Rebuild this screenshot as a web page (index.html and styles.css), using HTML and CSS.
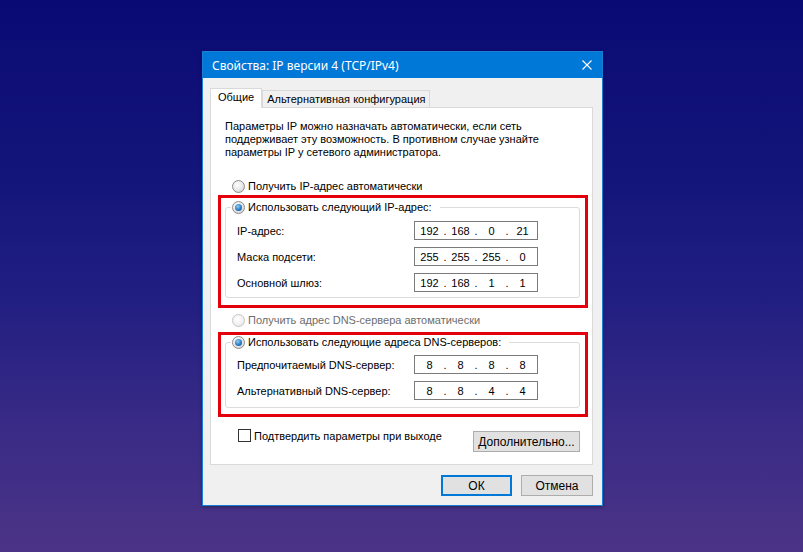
FILE: index.html
```html
<!DOCTYPE html>
<html lang="ru">
<head>
    <meta charset="UTF-8">
    <meta name="viewport" content="width=device-width, initial-scale=1.0">
    <title>Свойства: IP версии 4 (TCP/IPv4)</title>
    <link rel="stylesheet" href="styles.css">
</head>
<body>
    <div class="window">
        <div class="titlebar">
            <span>Свойства: IP версии 4 (TCP/IPv4)</span>
            <svg class="close" width="10" height="10" viewBox="0 0 10 10">
                <path d="M0.5 0.5 L9.5 9.5 M9.5 0.5 L0.5 9.5" stroke="#fff" stroke-width="1.1" fill="none"/>
            </svg>
        </div>

        <div class="content">
            <div class="tabs">
                <div class="tab active">Общие</div>
                <div class="tab">Альтернативная конфигурация</div>
            </div>

            <div class="panel">
                <p class="intro">Параметры IP можно назначать автоматически, если сеть<br>поддерживает эту возможность. В противном случае узнайте<br>параметры IP у сетевого администратора.</p>

                <div class="option"><span class="radio"></span>Получить IP-адрес автоматически</div>

                <div class="highlight hl-ip">
                    <fieldset class="group">
                        <legend><span class="radio checked"></span>Использовать следующий IP-адрес:</legend>
                        <div class="field">
                            <span>IP-адрес:</span>
                            <div class="ip"><span>192</span><i>.</i><span>168</span><i>.</i><span>0</span><i>.</i><span>21</span></div>
                        </div>
                        <div class="field">
                            <span>Маска подсети:</span>
                            <div class="ip"><span>255</span><i>.</i><span>255</span><i>.</i><span>255</span><i>.</i><span>0</span></div>
                        </div>
                        <div class="field">
                            <span>Основной шлюз:</span>
                            <div class="ip"><span>192</span><i>.</i><span>168</span><i>.</i><span>1</span><i>.</i><span>1</span></div>
                        </div>
                    </fieldset>
                </div>

                <div class="option disabled"><span class="radio"></span>Получить адрес DNS-сервера автоматически</div>

                <div class="highlight hl-dns">
                    <fieldset class="group">
                        <legend><span class="radio checked"></span>Использовать следующие адреса DNS-серверов:</legend>
                        <div class="field">
                            <span>Предпочитаемый DNS-сервер:</span>
                            <div class="ip"><span>8</span><i>.</i><span>8</span><i>.</i><span>8</span><i>.</i><span>8</span></div>
                        </div>
                        <div class="field">
                            <span>Альтернативный DNS-сервер:</span>
                            <div class="ip"><span>8</span><i>.</i><span>8</span><i>.</i><span>4</span><i>.</i><span>4</span></div>
                        </div>
                    </fieldset>
                </div>

                <div class="confirm-row">
                    <div class="check-label"><span class="checkbox"></span>Подтвердить параметры при выходе</div>
                    <button class="btn btn-advanced">Дополнительно...</button>
                </div>
            </div>

            <div class="footer">
                <button class="btn btn-default">ОК</button>
                <button class="btn">Отмена</button>
            </div>
        </div>
    </div>
</body>
</html>
```

FILE: styles.css
```css
html, body {
    margin: 0;
    height: 552px;
    overflow: hidden;
}
body {
    background: linear-gradient(to bottom, #0a0a74 0%, #15167b 35%, #221f82 55%, #3a2b86 78%, #4b3486 100%);
    font-family: "Liberation Sans", Arial, sans-serif;
    font-size: 11px;
    color: #000;
    padding-top: 51px;
    box-sizing: border-box;
}
.window {
    width: 399px;
    margin-left: 202px;
    border: 1px solid #1a7fd4;
    background: #f0f0f0;
    box-shadow: 0 1px 3px rgba(0, 0, 0, 0.35);
}
.titlebar {
    height: 26px;
    background: #0078d7;
    color: #fff;
    font-family: "Noto Sans", "Open Sans", sans-serif;
    font-size: 12px;
    display: flex;
    align-items: center;
    justify-content: space-between;
    padding: 0 10px 0 9px;
}
.close {
    display: block;
}
.content {
    padding: 10px 9px 9px 7px;
}

/* tabs */
.tabs {
    display: flex;
    height: 20px;
}
.tab {
    box-sizing: border-box;
    border: 1px solid #d9d9d9;
    border-bottom: none;
    background: #f0f0f0;
    height: 17px;
    margin-top: 2px;
    line-height: 16px;
    padding: 0 4px;
    white-space: nowrap;
}
.tab.active {
    background: #fff;
    height: 20px;
    margin-top: 0;
    line-height: 17px;
    padding: 0 7px;
    position: relative;
    z-index: 1;
}
.panel {
    margin-top: -1px;
    background: #fff;
    border: 1px solid #d9d9d9;
    padding: 12px 0 12px 0;
}
.intro {
    margin: 0 0 0 14px;
    line-height: 13px;
}

/* radio buttons and checkbox */
.option {
    display: flex;
    align-items: center;
    height: 16px;
    margin: 19px 0 0 21px;
    white-space: nowrap;
}
.option.disabled {
    color: #6d6d6d;
    margin-top: 4px;
}
.radio {
    box-sizing: border-box;
    width: 13px;
    height: 13px;
    border-radius: 50%;
    border: 1px solid #8b8b8b;
    background: radial-gradient(circle at 40% 35%, #ffffff 0%, #e6e6e6 55%, #c9c9c9 100%);
    margin-right: 3px;
    display: inline-block;
    position: relative;
    flex: none;
}
.option.disabled .radio {
    border-color: #c4c4c4;
    background: radial-gradient(circle at 40% 35%, #ffffff 0%, #f0f0f0 60%, #e0e0e0 100%);
}
.radio.checked::after {
    content: "";
    position: absolute;
    left: 2px;
    top: 2px;
    width: 7px;
    height: 7px;
    border-radius: 50%;
    background: radial-gradient(circle at 40% 35%, #8fd0f5 0%, #2a7cc4 55%, #143f7a 100%);
}
.checkbox {
    box-sizing: border-box;
    width: 13px;
    height: 13px;
    border: 1px solid #333;
    background: #fff;
    margin-right: 3px;
    flex: none;
}

/* red highlight frames */
.highlight {
    border: 3px solid #e3000b;
    margin: 1px 4px 0 7px;
}
.hl-dns {
    margin-top: 4px;
}
.group {
    border: 1px solid #dcdcdc;
    border-radius: 3px;
    margin: 2px 5px 7px 4px;
    padding: 7px 41px 5px 11px;
}
.hl-dns .group {
    margin: 0 5px 6px 4px;
    padding-top: 6px;
    padding-bottom: 7px;
}
.group legend {
    display: flex;
    align-items: center;
    height: 14px;
    line-height: 14px;
    padding: 0 8px 0 1px;
    margin-left: -6px;
    white-space: nowrap;
}
.field {
    display: flex;
    align-items: center;
    justify-content: space-between;
    margin-bottom: 7px;
    white-space: nowrap;
}
.field:last-child {
    margin-bottom: 0;
}
.ip {
    box-sizing: border-box;
    width: 124px;
    height: 19px;
    border: 1px solid #7a7a7a;
    background: #fff;
    display: flex;
    align-items: center;
    padding-left: 1px;
}
.ip span {
    width: 27px;
    text-align: center;
}
.ip i {
    width: 4px;
    font-style: normal;
    text-align: center;
}

/* bottom row */
.confirm-row {
    display: flex;
    justify-content: space-between;
    align-items: flex-start;
    margin: 12px 12px 0 27px;
}
.check-label {
    display: flex;
    align-items: center;
    height: 13px;
    white-space: nowrap;
}
.btn {
    box-sizing: border-box;
    font-family: inherit;
    font-size: 12px;
    background: #e1e1e1;
    border: 1px solid #adadad;
    height: 21px;
    width: 72px;
    padding: 0;
    color: #000;
}
.btn-advanced {
    width: 107px;
    margin-top: 2px;
}
.btn-default {
    width: 71px;
    border: 2px solid #0078d7;
}
.footer {
    display: flex;
    justify-content: flex-end;
    gap: 9px;
    margin-top: 10px;
}
```
